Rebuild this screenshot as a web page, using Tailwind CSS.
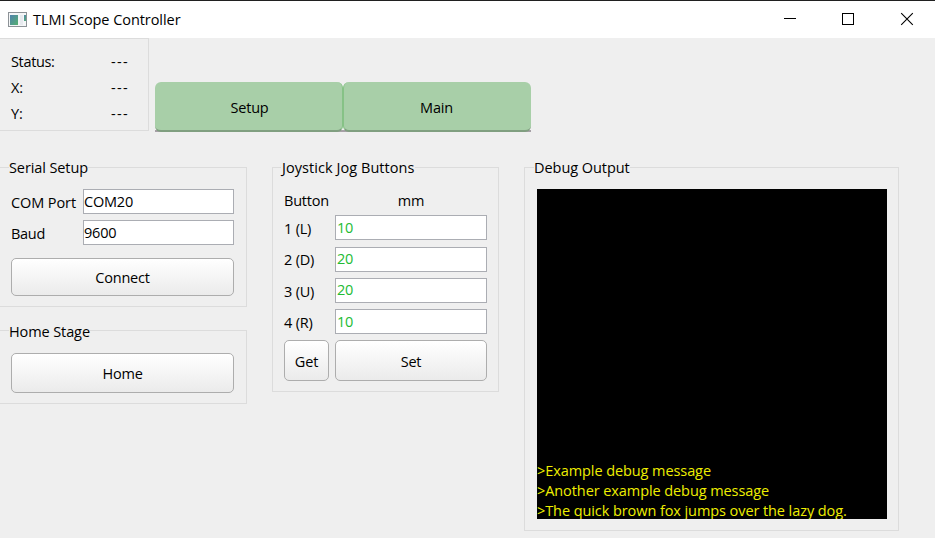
<!DOCTYPE html>
<html lang="en">
<head>
<meta charset="utf-8">
<title>TLMI Scope Controller</title>
<script src="https://cdn.jsdelivr.net/npm/@tailwindcss/browser@4"></script>
</head>
<body class="w-[935px] h-[538px] overflow-hidden bg-[#efefef] text-black text-[14.5px] leading-5 tracking-[-0.2px] whitespace-nowrap font-['Open_Sans','Noto_Sans',sans-serif]">
<header class="h-[38px] bg-white border-t border-[#202020] flex items-center">
  <svg class="ml-2 w-[19px] h-[15px] shrink-0" viewBox="0 0 19 15">
    <defs><linearGradient id="a" x1="0" y1="0" x2="1" y2="1"><stop offset="0" stop-color="#4f82ad"/><stop offset="1" stop-color="#55b070"/></linearGradient></defs>
    <rect x=".5" y=".5" width="18" height="14" fill="#f4f6f7" stroke="#8d9297"/>
    <rect x="2" y="3" width="8" height="10" fill="url(#a)"/>
    <rect x="12" y="3" width="3" height="10" fill="#e6e9ee"/>
    <rect x="16" y="3" width="2" height="6" fill="url(#a)"/>
  </svg>
  <h1 class="ml-1.5 tracking-[-0.06px]">TLMI Scope Controller</h1>
  <div class="ml-auto flex">
    <svg class="w-[58px] h-[37px]" viewBox="0 0 58 37" shape-rendering="crispEdges"><path d="M22 17.500h12" stroke="#000"/></svg>
    <svg class="w-[58px] h-[37px]" viewBox="0 0 58 37" shape-rendering="crispEdges"><rect x="22.5" y="12.5" width="11" height="11" fill="none" stroke="#000"/></svg>
    <svg class="w-[57px] h-[37px]" viewBox="0 0 57 37"><path d="M23.200 12.200l11.600 11.600M34.800 12.200l-11.600 11.600" stroke="#000" stroke-width="1.1"/></svg>
  </div>
</header>

<div class="flex h-[93px]">
  <section class="w-[149px] border border-l-0 border-[#dcdcdc] pl-[11px] pr-[19px] pt-[10px] flex flex-col leading-[26px]">
    <div class="flex justify-between"><span class="tracking-[-0.35px]">Status:</span><span class="tracking-[1.3px]">---</span></div>
    <div class="flex justify-between"><span>X:</span><span class="tracking-[1.3px]">---</span></div>
    <div class="flex justify-between"><span>Y:</span><span class="tracking-[1.3px]">---</span></div>
  </section>
  <nav class="ml-1.5 mt-11 w-[376px] h-[50px] flex bg-[linear-gradient(transparent_48px,#a6a0a6_48px)]">
    <div class="w-[188px] h-[50px] rounded-[6px] bg-[#a8cfa8] border-b-2 border-[#809f80] border-r border-r-[#86c286] flex items-center justify-center pt-[3px] pl-0.5">Setup</div>
    <div class="w-[188px] h-[50px] rounded-[6px] bg-[#a8cfa8] border-b-2 border-[#809f80] border-l border-l-[#86c286] flex items-center justify-center pt-[3px] pr-0.5">Main</div>
  </nav>
</div>

<main class="flex items-start pt-9">
  <div class="w-[247px]">
    <section class="relative h-[140px] border border-l-0 border-[#dcdcdc] pt-[21px] pl-[11px] pr-3">
      <h2 class="absolute left-[9px] -top-[10px] bg-[#efefef] tracking-[-0.1px]">Serial Setup</h2>
      <div class="flex mb-1.5"><span class="w-[72px] pt-1 tracking-[-0.1px]">COM Port</span><div class="w-[151px] h-[25px] bg-white border border-[#abadb3] leading-[23px]">COM20</div></div>
      <div class="flex"><span class="w-[72px] pt-1 tracking-[-0.3px]">Baud</span><div class="w-[151px] h-[25px] bg-white border border-[#abadb3] leading-[24px]">9600</div></div>
      <button class="mt-[13px] w-[223px] h-[38px] rounded-[5px] border border-[#adadad] bg-linear-to-b from-white to-[#ebebeb] tracking-[-0.2px] pt-px">Connect</button>
    </section>
    <section class="relative mt-[23px] h-[74px] border border-l-0 border-[#dcdcdc] pt-[22px] pl-[11px]">
      <h2 class="absolute left-[9px] -top-[9px] bg-[#efefef] tracking-[-0.1px]">Home Stage</h2>
      <button class="block w-[223px] h-10 rounded-[5px] border border-[#adadad] bg-linear-to-b from-white to-[#ebebeb] tracking-[-0.2px] pt-0.5">Home</button>
    </section>
  </div>

  <section class="relative ml-[25px] w-[227px] h-[225px] border border-[#dcdcdc] pt-[22px] pl-[11px]">
    <h2 class="absolute left-[8px] -top-[10px] bg-[#efefef] pl-px tracking-[0.06px]">Joystick Jog Buttons</h2>
    <div class="grid grid-cols-[45px_152px] gap-x-1.5">
      <span class="h-[25px] pt-px">Button</span><span class="text-center pt-px">mm</span>
      <span class="pt-1">1 (L)</span><div class="h-[25px] mb-[7px] bg-white border border-[#abadb3] pl-px leading-[24px] text-[#22bb33]">10</div>
      <span class="pt-[3px]">2 (D)</span><div class="h-[25px] mb-1.5 bg-white border border-[#abadb3] pl-px leading-[22px] text-[#22bb33]">20</div>
      <span class="pt-1">3 (U)</span><div class="h-[25px] mb-1.5 bg-white border border-[#abadb3] pl-px leading-[22px] text-[#22bb33]">20</div>
      <span class="pt-1">4 (R)</span><div class="h-[25px] mb-1.5 bg-white border border-[#abadb3] pl-px leading-[24px] text-[#22bb33]">10</div>
      <button class="h-[41px] rounded-[5px] border border-[#adadad] bg-linear-to-b from-white to-[#ebebeb] tracking-[-0.2px] pt-0.5">Get</button>
      <button class="h-[41px] rounded-[5px] border border-[#adadad] bg-linear-to-b from-white to-[#ebebeb] tracking-[-0.2px] pt-0.5">Set</button>
    </div>
  </section>

  <section class="relative ml-[25px] w-[375px] h-[364px] border border-[#dcdcdc] pt-[21px] pl-3">
    <h2 class="absolute left-[9px] -top-[10px] bg-[#efefef] tracking-[-0.05px]">Debug Output</h2>
    <div class="w-[350px] h-[330px] bg-black text-[#eeee00] flex flex-col justify-end overflow-hidden tracking-[-0.08px]">
      <p>&gt;Example debug message</p>
      <p>&gt;Another example debug message</p>
      <p class="-mb-0.5">&gt;The quick brown fox jumps over the lazy dog.</p>
    </div>
  </section>
</main>
</body>
</html>
